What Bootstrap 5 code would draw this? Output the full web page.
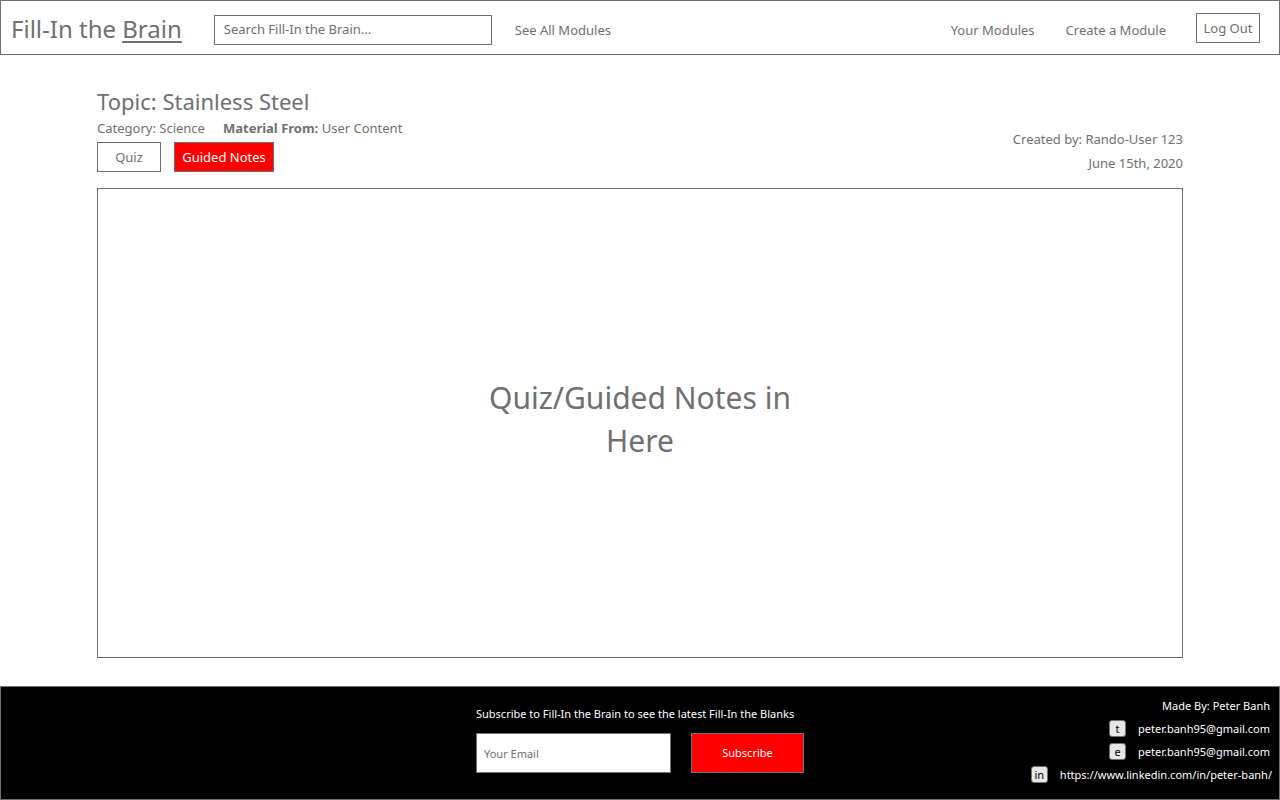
<!DOCTYPE html>
<html lang="en">
<head>
<meta charset="utf-8">
<meta name="viewport" content="width=device-width, initial-scale=1">
<title>Fill-In the Brain</title>
<link rel="stylesheet" href="https://cdn.jsdelivr.net/npm/bootstrap@5.3.0/dist/css/bootstrap.min.css">
<style>
:root { --line: #707070; --accent: #ff0000; }
body { font-family: "Noto Sans", "Open Sans", sans-serif; font-size: 13px; line-height: 20px; color: var(--line); background: #fff; }
a { color: inherit; text-decoration: none; }
.site-header { border: 1px solid var(--line); padding: 12px 19px 9px 10px; }
.brand { font-size: 24px; line-height: 32px; margin-right: 32px; }
.brand u { text-decoration-thickness: 2px; text-underline-offset: 3px; }
.boxed, .boxed:focus { border: 1px solid var(--line); border-radius: 0; box-shadow: none; color: var(--line); font-size: 13px; line-height: 20px; }
.boxed::placeholder { color: var(--line); opacity: 1; }
.search-form { width: 278px; margin: 2px 23px 0 0; }
.search-form .boxed { height: 30px; padding: 3px 9px 5px; }
.main-links { gap: 31px; padding-top: 7px; margin-right: 30px; }
.small-btn { height: 30px; padding: 4px 0; min-width: 64px; }
.wide-btn { min-width: 100px; }
.accent, .accent:hover { background: var(--accent); color: #fff; border-color: var(--line); }
.module-page { padding: 31px 97px 28px; }
.module-title { font-size: 22px; line-height: 30px; font-weight: 400; }
.module-meta { gap: 18px; line-height: 22px; margin-top: 1px; }
.module-tabs { gap: 13px; margin-top: 3px; }
.byline { line-height: 24px; padding-top: 41px; }
.stage { border: 1px solid var(--line); margin-top: 13px; font-size: 30px; line-height: 43px; }
.stage p { width: 340px; padding-bottom: 8px; }
.site-footer { background: #000; color: #fff; border: 1px solid var(--line); font-size: 11px; min-height: 114px; }
.footer-side { padding: 7px 7px 0; }
.subscribe-form { padding-top: 16px; width: 328px; }
.subscribe-form label { line-height: 22px; white-space: nowrap; }
.subscribe-fields { gap: 20px; margin-top: 8px; }
.subscribe-fields .boxed { height: 40px; font-size: 11px; }
.subscribe-fields .form-control { padding: 0 7px; }
.subscribe-fields .btn { width: 113px; flex: none; color: #fff; }
.contact { line-height: 23px; }
.contact .tag { width: 17px; height: 17px; border: 1px solid var(--line); border-radius: 3px; background: #e6e6e6; color: #000; line-height: 15px; text-align: center; margin-right: 12px; }
.contact .inset-line { padding-right: 2px; }
</style>
</head>
<body class="d-flex flex-column min-vh-100">
<header class="site-header d-flex align-items-start">
  <a href="#" class="brand text-nowrap">Fill-In the <u>Brain</u></a>
  <form class="search-form" role="search">
    <input type="search" class="form-control boxed" placeholder="Search Fill-In the Brain..." aria-label="Search Fill-In the Brain">
  </form>
  <nav class="main-links d-flex flex-grow-1" aria-label="Main">
    <a href="#">See All Modules</a>
    <a href="#" class="ms-auto">Your Modules</a>
    <a href="#">Create a Module</a>
  </nav>
  <button type="button" class="btn boxed small-btn">Log Out</button>
</header>
<main class="module-page d-flex flex-column flex-grow-1">
  <div class="d-flex justify-content-between align-items-start">
    <div>
      <h1 class="module-title mb-0">Topic: Stainless Steel</h1>
      <div class="module-meta d-flex">
        <span>Category: Science</span>
        <span><strong>Material From:</strong> User Content</span>
      </div>
      <div class="module-tabs d-flex">
        <button type="button" class="btn boxed small-btn">Quiz</button>
        <button type="button" class="btn boxed small-btn wide-btn accent">Guided Notes</button>
      </div>
    </div>
    <div class="byline text-end">
      <div>Created by: Rando-User 123</div>
      <div>June 15th, 2020</div>
    </div>
  </div>
  <section class="stage flex-grow-1 d-flex align-items-center justify-content-center text-center">
    <p class="mb-0">Quiz/Guided Notes in Here</p>
  </section>
</main>
<footer class="site-footer">
  <div class="row g-0">
    <div class="footer-side col"></div>
    <form class="subscribe-form col-auto">
      <label for="email" class="d-block">Subscribe to Fill-In the Brain to see the latest Fill-In the Blanks</label>
      <div class="subscribe-fields d-flex">
        <input type="email" id="email" class="form-control boxed" placeholder="Your Email">
        <button type="submit" class="btn boxed accent">Subscribe</button>
      </div>
    </form>
    <address class="footer-side contact col mb-0 d-flex flex-column align-items-end">
      <div class="inset-line">Made By: Peter Banh</div>
      <div class="inset-line d-flex align-items-center"><span class="tag">t</span><a href="#">peter.banh95@gmail.com</a></div>
      <div class="inset-line d-flex align-items-center"><span class="tag">e</span><a href="mailto:peter.banh95@gmail.com">peter.banh95@gmail.com</a></div>
      <div class="d-flex align-items-center"><span class="tag">in</span><a href="https://www.linkedin.com/in/peter-banh/">https://www.linkedin.com/in/peter-banh/</a></div>
    </address>
  </div>
</footer>
<script src="https://cdn.jsdelivr.net/npm/bootstrap@5.3.0/dist/js/bootstrap.bundle.min.js"></script>
</body>
</html>
